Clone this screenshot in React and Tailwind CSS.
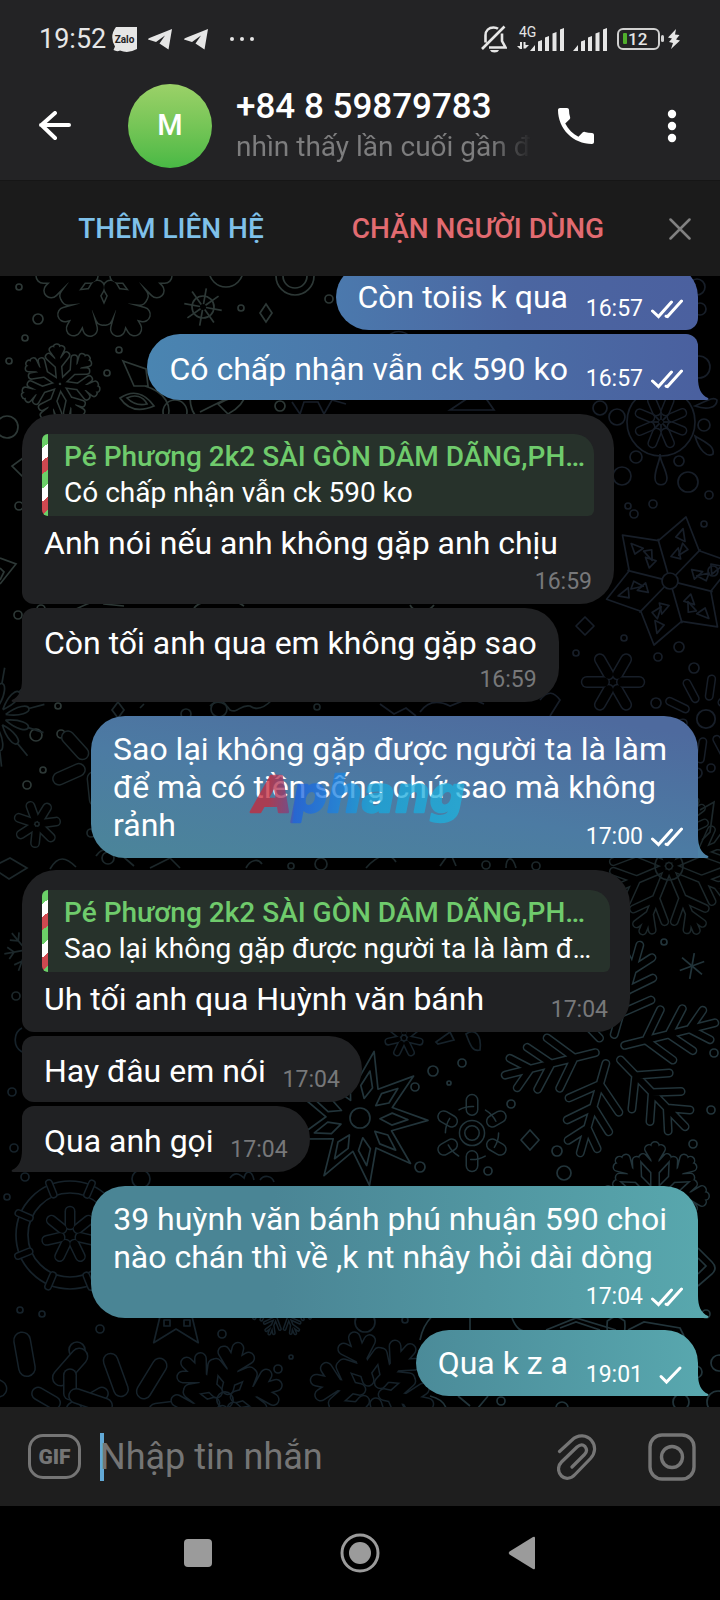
import React from "react";

/* ---------- wallpaper ---------- */

const FERN = "M0 -14V-100M0 -34L-24 -54M0 -34L24 -54M0 -56L-20 -74M0 -56L20 -74M0 -76L-14 -92M0 -76L14 -92";
const BRANCH = "M0 -10V-100M0 -50L-24 -76M0 -50L24 -76M0 -74L-12 -94M0 -74L12 -94";
const PETAL = "M0 -36V-90";
const LEAF = "M0 -20V-92M0 -34L-30 -56M0 -34L30 -56M0 -58L-22 -80M0 -58L22 -80";

function Flake({ x, y, s = 40, n = 6, r = 0, w = 8, d = BRANCH, c, children }) {
  const k = s / 100;
  const arms = Array.from({ length: n }, (_, i) => r + (360 / n) * i);
  return (
    <g transform={`translate(${x} ${y}) scale(${k})`} strokeLinecap="round" strokeLinejoin="round">
      {[
        [c, w + 3],
        ["#000", w],
      ].map(([color, width]) => (
        <g key={width} stroke={color} strokeWidth={width / k}>
          {arms.map((a) => (
            <path key={a} d={d} transform={`rotate(${a})`} />
          ))}
        </g>
      ))}
      {children}
    </g>
  );
}

function Dots({ c, items }) {
  return (
    <g stroke={c}>
      {items.map(([x, y, r]) => (
        <circle key={`${x}-${y}-${r}`} cx={x} cy={y} r={r} />
      ))}
    </g>
  );
}

function Star({ x, y, n, outer, inner, r = 0, c, children }) {
  const pts = [];
  for (let i = 0; i < n * 2; i++) {
    const rad = i % 2 ? inner : outer;
    const a = ((r + (180 / n) * i - 90) * Math.PI) / 180;
    pts.push(`${(Math.cos(a) * rad).toFixed(1)},${(Math.sin(a) * rad).toFixed(1)}`);
  }
  return (
    <g transform={`translate(${x} ${y})`} stroke={c} strokeLinejoin="round">
      <polygon points={pts.join(" ")} />
      {children}
    </g>
  );
}

function Spokes({ n, r = 0, d }) {
  return Array.from({ length: n }, (_, i) => <path key={i} d={d} transform={`rotate(${r + (360 / n) * i})`} />);
}

function Wallpaper() {
  const a = "#2d3836";
  const b = "#171e28";
  const g = "#1c272a";
  const e = "#22343a";
  const f = "#16222a";
  return (
    <svg
      aria-hidden="true"
      className="absolute inset-0 h-full w-full"
      viewBox="0 276 720 1131"
      preserveAspectRatio="xMidYMid slice"
      fill="none"
      strokeWidth="1.7"
    >
      {/* upper left */}
      <Flake x={104} y={276} s={66} r={30} w={13} d={LEAF} c={a} />
      <g stroke={a} transform="translate(203 307)">
        <circle r="11" />
        <Spokes n={8} r={10} d="M0 -3V-19" />
      </g>
      <path d="M266 304l6 9-6 9-6-9z" stroke={a} />
      <Dots
        c={a}
        items={[
          [19, 287, 3], [38, 319, 5], [25, 338, 3], [9, 361, 3], [119, 350, 3], [107, 373, 3], [241, 308, 3],
          [329, 299, 4], [7, 427, 11], [19, 506, 4], [280, 406, 5], [175, 412, 12], [226, 270, 17], [295, 276, 19],
          [295, 276, 12], [18, 615, 4], [41, 609, 4], [58, 706, 3], [36, 735, 6], [61, 734, 4], [43, 770, 3], [27, 785, 4],
        ]}
      />
      <Flake x={60} y={384} s={37} n={7} r={-5} w={5} c={a} />
      <path d="M123 361l23 8 2 17-14 0zM120 398c12-8 24-6 34 8-14 6-26 4-34-8zM127 398c8-4 16-2 20 6-8 2-14 0-20-6zM145 386c20 6 28 20 22 34M190 396c0 14 4 20 10 24M200 412l60-30M218 404c14-8 26-8 30-14-4 14-12 20-20 24z" stroke={a} />
      <path d="M23 458L12 466l12 12M0 558l16 6-16 20M0 568l4 4-4 8" stroke={a} />
      <path d="M292 402l8 12 4-12 14 0 6 12 8-14 14 4M384 340c10-12 20-10 28-2M450 410l30-20 14 20z" stroke={b} />
      <path d="M70 612c20-10 30-14 34-8l20 2M194 608c10-12 30-4 40-8l10 6M410 605c4 8 18 8 24 0" stroke={a} />

      {/* upper right */}
      <Dots
        c={b}
        items={[
          [697, 287, 8], [700, 309, 6], [699, 367, 11], [617, 417, 8], [704, 425, 6], [636, 457, 6], [679, 461, 5],
          [622, 476, 9], [688, 482, 10], [709, 495, 4], [653, 504, 4], [634, 514, 4], [628, 506, 3], [704, 524, 3],
          [624, 638, 3], [576, 653, 3], [679, 647, 5], [658, 657, 4], [713, 571, 5], [656, 703, 5], [694, 668, 5],
          [697, 773, 5], [711, 768, 4], [600, 408, 7],
        ]}
      />
      <Flake x={661} y={422} s={32} n={8} r={22} w={7} d="M0 -36V-72" c={b} />
      <g stroke={b} transform="translate(661 422)">
        <circle r="34" />
        <Spokes n={8} d="M0 -2V-10" />
        <path d="M-6 56c0-10 5-16 5-24 0 8 6 14 7 24 0 9-12 9-12 0zM34 14c10 6 20 10 18 18-6 4-14-4-18-18zM34-16c10-4 18-10 22-6 0 8-10 10-22 6z" />
      </g>
      <Star x={670} y={581} n={6} outer={66} inner={42} r={14} c={b}>
        <circle r="8" />
        <Spokes n={6} r={44} d="M0 -8V-44" />
        <Spokes n={6} r={14} d="M-5 -24L0 -34 5 -24zM-5 -44L0 -54 5 -42z" />
        <Spokes n={6} r={36} d="M-8 -26L-12 -38 -4 -36z" />
      </Star>
      <path d="M585 617l9 9-9 9-9-9z" stroke={b} strokeLinejoin="round" />
      <Flake x={613} y={682} s={32} n={6} r={30} w={9} d="M0 -28V-82" c={b} />
      <Flake x={706} y={719} s={46} n={10} r={8} w={6} d="M0 -50V-88" c={b}>
        <circle r="20" stroke={b} strokeWidth="4" />
      </Flake>
      <path d="M380 704l14 10 12-6 10 8M420 712c10-14 22-10 30-6l20-8 14 6M540 700c8-10 14-8 20 0l-10 16" stroke={b} />

      {/* middle left */}
      <g stroke={g} transform="translate(-4 717)">
        <Spokes n={11} r={10} d="M0 -10C-6 -24 -4 -34 0 -34 4 -34 6 -24 0 -10M0 -34V-50" />
      </g>
      <Flake x={92} y={764} s={40} n={5} r={30} w={11} d={PETAL} c={g} />
      <Flake x={37} y={824} s={24} n={7} r={-20} w={7} d="M0 -26V-80" c={g} />
      <path d="M118 702l6 8-6 8-6-8z" stroke={g} />
      <path d="M-2 864l12-6 17 10-18 11-12-8zM96 856c6-10 20-8 24-2l14 12M150 868l20-10 10 10M210 706c8-8 16-2 20 4 8 4 10-6 20-4 8 6 16 0 22-6M246 868c4-8 12-10 16-4M50 869c8-14 16-12 26-2M140 708l4-4" stroke={g} />
      <Dots c={g} items={[[219, 709, 8], [317, 707, 3], [291, 866, 3], [321, 864, 6], [108, 858, 6], [16, 996, 4], [486, 865, 4], [536, 866, 4], [91, 833, 4], [186, 714, 5]]} />
      <g stroke={g} transform="translate(26 950)">
        <Spokes n={6} r={20} d="M0 -4V-22M0 -12L-6 -18M0 -12L6 -18" />
      </g>

      {/* middle right */}
      <Flake x={669} y={866} s={70} n={8} r={22} w={6} c={g}>
        <circle r="20" stroke={g} strokeWidth="2.4" />
      </Flake>
      <path d="M700 810l14-8-4 30-8 8M440 866l10-14 6 14M506 868c0-10 6-14 10 0M366 868c12-14 24-16 30-6" stroke={g} />
      <g stroke={e} transform="translate(692 966)">
        <Spokes n={6} r={10} d="M0 0V-13" />
      </g>
      <Flake x={610} y={1049} s={108} r={-14 + 90} w={6} d={FERN} c={e} />
      <Star x={360} y={1118} n={9} outer={68} inner={34} r={12} c={e}>
        <Spokes n={9} r={12} d="M0 -20L-6 -32 0 -48 6 -32z" />
        <circle r="10" />
      </Star>
      <Flake x={472} y={1133} s={38} n={6} w={10} d="M0 -62V-86" c={e}>
        <g stroke={e} strokeWidth="4">
          <circle r="70" strokeDasharray="40 33" />
          <circle r="33" />
          <circle r="19" />
        </g>
      </Flake>
      <path d="M530 1130l9 10-9 10-9-10z" stroke={e} strokeLinejoin="round" />
      <Flake x={404} y={1038} s={20} n={7} w={5} d="M0 -30V-80" c={f} />
      <path d="M436 1042l14-10 4 8-16 4zM466 1034c8-6 16 0 14 16-8 2-10-6-14-16z" stroke={f} />
      <Dots
        c={e}
        items={[
          [557, 1151, 5], [564, 1173, 7], [693, 1144, 4], [711, 1110, 4], [714, 1053, 4], [433, 1071, 5], [462, 1063, 4],
          [415, 1087, 4], [511, 1104, 4], [420, 1167, 5], [488, 1171, 4], [664, 942, 3], [449, 1083, 2],
        ]}
      />
      <Flake x={655} y={1196} s={50} n={8} w={7} c={e} />
      <path d="M698 1248l14 14c4 4 4 8 0 12l-14 12M698 1258l8 8-8 8" stroke={e} />

      {/* lower left */}
      <Dots
        c={f}
        items={[
          [12, 1092, 4], [14, 1148, 4], [25, 1177, 4], [7, 1197, 3], [141, 1179, 9], [70, 1235, 54], [70, 1235, 42],
          [20, 1310, 3], [42, 1314, 3], [100, 1329, 4], [152, 1380, 3], [222, 1334, 4], [278, 1369, 4], [291, 1357, 2],
          [365, 1322, 10], [405, 1320, 3], [77, 1350, 8],
        ]}
      />
      <Flake x={70} y={1235} s={56} n={8} r={-22} w={5} d="M0 -78V-100" c={f} />
      <Flake x={70} y={1235} s={34} n={7} w={8} d="M0 -30V-70" c={f} />
      <path d="M22 1052c-10-6-8-20 0-24M230 1178c6-8 12-2 14 0 2-8 8-8 10 2M260 1180c4-6 12-4 14 2" stroke={f} />
      <Star x={176} y={1312} n={5} outer={38} inner={17} c={f}>
        <path d="M-12 8h6v6h-6zM8 8h6v6H8z" />
      </Star>
      <Flake x={282} y={1302} s={34} n={8} r={22} w={1} c={f} />
      <Flake x={34} y={1408} s={78} n={7} r={-10} w={15} d="M0 -52V-88" c={f} />
      <Flake x={70} y={1412} s={46} n={6} r={0} w={11} d="M0 -40V-80" c={f} />
      <Flake x={130} y={1414} s={66} n={7} r={-20} w={13} d="M0 -40V-86" c={f} />
      <Flake x={225} y={1400} s={58} r={14} w={10} d={LEAF} c={f}>
        <circle r="14" stroke={f} strokeWidth="3" />
      </Flake>
      <Flake x={372} y={1392} s={62} r={-18} w={10} d={LEAF} c={f} />

      {/* lower right */}
      <path d="M420 1340c4-20 16-30 30-32M512 1318c4 10 8 14 18 14M546 1330l30-12 40 12M560 1328l16-6 24 8M628 1330l16-8 36 6 4 8M470 1318v14" stroke={e} />
      <Star x={616} y={1326} n={6} outer={10} inner={9} c={e} />
      <Dots c={e} items={[[706, 1314, 4], [562, 1408, 6], [501, 1401, 4], [681, 1402, 8], [719, 1363, 8], [718, 1402, 11], [696, 1372, 6]]} />
      <path d="M430 1396c8 2 14 6 16 12M458 1396l12 10M488 1396l-10 12" stroke={e} />
    </svg>
  );
}

/* ---------- messages ---------- */

function Ticks({ double }) {
  return (
    <svg className="h-5 w-8 shrink-0" viewBox="0 0 32 20" fill="none" stroke="currentColor" strokeWidth="3" strokeLinecap="round" aria-label={double ? "Đã xem" : "Đã gửi"}>
      {double ? <path d="M1.500 12L7.500 17.500 20.500 3M15 17.200L16.500 17.500 30.500 2" /> : <path d="M10 11.500L15.500 17 29 3" />}
    </svg>
  );
}

function Tail({ side }) {
  return (
    <svg
      aria-hidden="true"
      className={side === "right" ? "absolute bottom-0 -right-[11px] h-[22px] w-3" : "absolute bottom-0 -left-[11px] h-[22px] w-3 -scale-x-100"}
      viewBox="0 0 12 22"
    >
      <path d="M0 0H1C1 10 4 17 11 20C12 21 11 22 10 22H0Z" fill="currentColor" />
    </svg>
  );
}

function Quote({ name, text }) {
  return (
    <blockquote className="mx-5 mt-5 mb-2 flex overflow-hidden rounded-md rounded-tr-[20px] bg-[#27322b]">
      <span className="w-1.5 shrink-0 bg-[repeating-linear-gradient(140deg,#6bd068_0px,#6bd068_11px,#fff_11px,#fff_21px,#cf4850_21px,#cf4850_31px)]" />
      <div className="min-w-0 py-[5px] pl-4 text-[28px] leading-9 whitespace-nowrap">
        <p className="font-medium text-[#6fcb6c]">{name}</p>
        <p>{text}</p>
      </div>
    </blockquote>
  );
}

function Message({ out, time, text, quote, continued, tail, inline, tall, double, shape, tone, overlay }) {
  const top = quote ? "pt-0" : continued ? "pt-4" : "pt-3.5";
  const bottom = tall ? (continued ? "pb-10" : "pb-[42px]") : continued ? "pb-3" : "pb-3.5";
  const right = inline ? (out ? "pr-[130px]" : "pr-24") : out ? "pr-[31px]" : "pr-[22px]";
  return (
    <article className={`relative w-fit ${out ? `mr-[22px] self-end ${tone.tail}` : "ml-[22px] text-[#202123]"}`}>
      {tail && <Tail side={out ? "right" : "left"} />}
      <div className={`relative grid text-white ${shape} ${out ? tone.fill : "bg-[#202123]"}`}>
        <div className="col-start-1 row-start-1">
          {quote && <Quote {...quote} />}
          <p className={`pl-[22px] text-[32px] leading-[38px] whitespace-pre ${top} ${bottom} ${right}`}>{text}</p>
        </div>
        <div className={`col-start-1 row-start-1 flex items-center gap-2 self-end justify-self-end text-[23px] leading-6 ${out ? "pr-[15px] pb-[9px]" : "pr-[22px] pb-2.5 text-[#77787a]"}`}>
          <time>{time}</time>
          {out && <Ticks double={double} />}
        </div>
      </div>
      {overlay}
    </article>
  );
}

function Watermark() {
  return (
    <svg className="absolute top-[50px] left-[158px] h-16 w-[224px] opacity-75" viewBox="0 0 224 64">
      <defs>
        <linearGradient id="wordmark" gradientUnits="userSpaceOnUse" x1="0" y1="0" x2="224" y2="20">
          <stop offset=".1" stopColor="#c8283a" />
          <stop offset=".19" stopColor="#8a3c78" />
          <stop offset=".22" stopColor="#1c5fe0" />
          <stop offset=".4" stopColor="#1b82e2" />
          <stop offset=".55" stopColor="#18a6dc" />
          <stop offset="1" stopColor="#1fb4de" />
        </linearGradient>
      </defs>
      <g fontFamily="DejaVu Sans, sans-serif" fontSize="49" fontWeight="700" fontStyle="italic" strokeWidth="2.5" strokeLinejoin="round">
        <text x="5" y="46" fill="url(#wordmark)" stroke="url(#wordmark)">Aphang</text>
      </g>
    </svg>
  );
}

const tones = {
  blue1: { fill: "bg-linear-to-r from-[#4b79ad] via-[#4b66a1] to-[#4b609f]", tail: "text-[#4b609f]" },
  blue2: { fill: "bg-linear-to-r from-[#4a85b1] via-[#4a6da5] via-65% to-[#4a609f]", tail: "text-[#4a609f]" },
  steel: { fill: "bg-[linear-gradient(190deg,#4e6a9e_8%,#4c7ba3_55%,#4b8599)]", tail: "text-[#4d81a5]" },
  teal: { fill: "bg-linear-to-r from-[#4a8595] from-30% to-[#58a7ad]", tail: "text-[#58a7ad]" },
  teal2: { fill: "bg-linear-to-r from-[#4b8b99] to-[#58a7ae]", tail: "text-[#58a7ae]" },
};

const PEER = "Pé Phương 2k2 SÀI GÒN DÂM DÃNG,PH…";

function Chat() {
  return (
    <main className="relative min-h-0 flex-1 overflow-hidden bg-black">
      <Wallpaper />
      <div className="relative flex h-full flex-col-reverse overflow-y-auto [scrollbar-width:none]">
        <div className="flex shrink-0 flex-col pb-[11px]">
          <Message out inline double time="16:57" text="Còn toiis k qua" shape="rounded-[33px] rounded-br-xl" tone={tones.blue1} />
          <div className="h-1" />
          <Message out inline double continued tail time="16:57" text="Có chấp nhận vẫn ck 590 ko" shape="rounded-l-[33px] rounded-tr-xl" tone={tones.blue2} />
          <div className="h-3.5" />
          <Message
            tall
            time="16:59"
            text="Anh nói nếu anh không gặp anh chịu"
            quote={{ name: PEER, text: "Có chấp nhận vẫn ck 590 ko" }}
            shape="w-[592px] rounded-[34px] rounded-bl-xl"
          />
          <div className="h-1" />
          <Message tall continued tail time="16:59" text="Còn tối anh qua em không gặp sao" shape="rounded-r-[34px] rounded-tl-xl" />
          <div className="h-3.5" />
          <Message
            out
            double
            tail
            time="17:00"
            text={"Sao lại không gặp được người ta là làm\nđể mà có tiền sống chứ sao mà không\nrảnh"}
            shape="rounded-t-[34px] rounded-bl-[34px]"
            tone={tones.steel}
            overlay={<Watermark />}
          />
          <div className="h-3" />
          <Message
            time="17:04"
            text="Uh tối anh qua Huỳnh văn bánh"
            quote={{ name: PEER, text: "Sao lại không gặp được người ta là làm đ…" }}
            shape="w-[608px] rounded-[34px] rounded-bl-xl"
          />
          <div className="h-1" />
          <Message inline continued time="17:04" text="Hay đâu em nói" shape="rounded-r-[33px] rounded-l-xl" />
          <div className="h-1" />
          <Message inline continued tail time="17:04" text="Qua anh gọi" shape="rounded-r-[33px] rounded-tl-xl" />
          <div className="h-3.5" />
          <Message
            out
            tall
            double
            tail
            time="17:04"
            text={"39 huỳnh văn bánh phú nhuận 590 choi\nnào chán thì về ,k nt nhây hỏi dài dòng"}
            shape="rounded-t-[34px] rounded-bl-[34px]"
            tone={tones.teal}
          />
          <div className="h-3" />
          <Message out inline tail time="19:01" text="Qua k z a" shape="rounded-l-[33px] rounded-tr-[33px]" tone={tones.teal2} />
        </div>
      </div>
    </main>
  );
}

/* ---------- bars ---------- */

function Plane() {
  return (
    <svg className="h-[21px] w-6" viewBox="0 0 24 21" fill="#e6e6e6" aria-hidden="true">
      <path d="M24 0L20.500 20.500 11.500 14.500 17 6.500 8 13 0 10.500Q0 9.500 2 8.700Z" />
    </svg>
  );
}

function Signal() {
  return (
    <svg className="h-[23px] w-[35px]" viewBox="0 0 35 23" fill="#e6e6e6" aria-hidden="true">
      <path d="M0 23L5 17V23ZM8 13.500L12 12V23H8ZM15 9.500L19 8V23H15ZM22.500 5.500L26.500 4V23H22.500ZM30 1.500L34 0V23H30Z" />
    </svg>
  );
}

function StatusBar() {
  return (
    <div className="flex h-[78px] items-center justify-between pr-10 pl-[39px] text-[#e6e6e6]">
      <div className="flex items-center">
        <span className="text-[27px] leading-8">19:52</span>
        <svg className="ml-1.5 h-[25px] w-[25px]" viewBox="0 0 25 25" aria-label="Zalo">
          <path d="M4 0H25V22Q16 27 8 23.500Q5 25 1.500 23L3 19.500Q-3 9 4 0Z" fill="#e6e6e6" />
          <text x="12.500" y="15.500" textAnchor="middle" fontSize="10" fontWeight="700" fill="#232325" fontFamily="Roboto, sans-serif">Zalo</text>
        </svg>
        <span className="ml-[11px] flex gap-3">
          <Plane />
          <Plane />
        </span>
        <svg className="ml-[22px] h-1 w-6" viewBox="0 0 24 4" fill="currentColor" aria-hidden="true">
          <circle cx="2" cy="2" r="2" />
          <circle cx="12" cy="2" r="2" />
          <circle cx="22" cy="2" r="2" />
        </svg>
      </div>
      <div className="flex items-center">
        <svg className="h-7 w-[26px]" viewBox="0 0 26 28" fill="none" stroke="currentColor" strokeWidth="2.600" aria-label="Im lặng">
          <path d="M1 24L23.500 1.500M4.500 17.500V10.500C4.500 5.500 8 2.500 12.500 2.500 14.500 2.500 16 3 17 3.800M21 8.500V16L24.500 22.500H8" />
          <path d="M9 25H18Q17 27.500 13.500 27.500 10 27.500 9 25Z" fill="currentColor" stroke="none" />
        </svg>
        <svg className="ml-2.5 h-6 w-[13px] overflow-visible" viewBox="0 0 13 24" fill="currentColor" aria-hidden="true">
          <text x="2" y="10" fontSize="14" fontFamily="Roboto, sans-serif">4G</text>
          <path d="M3 15H5V22H3L0 19H3ZM6.500 15H8.500V18H12L8.500 21.500H6.500Z" />
        </svg>
        <Signal />
        <span className="ml-2">
          <Signal />
        </span>
        <svg className="ml-[9px] h-[22px] w-[47px]" viewBox="0 0 47 22" aria-label="Pin 12%">
          <rect x="1" y="1" width="41" height="20" rx="5" fill="none" stroke="#d0d0d0" strokeWidth="2" />
          <rect x="6" y="5" width="4" height="11" rx="1" fill="#4fae2c" />
          <rect x="44" y="7" width="3" height="7" rx="1.500" fill="#d0d0d0" />
          <text x="11" y="17" fontSize="17" fontWeight="500" fill="#e6e6e6" fontFamily="Roboto, sans-serif">12</text>
        </svg>
        <svg className="ml-1 h-5 w-3" viewBox="0 0 12 20" fill="currentColor" aria-hidden="true">
          <path d="M8 0L0 8.500 4 9.500 1 13 5 14 3 20 12 11.500 8 10.500 11.500 6 7 5.500Z" />
        </svg>
      </div>
    </div>
  );
}

function Header() {
  return (
    <header className="bg-[#232325] pb-1.5">
      <StatusBar />
      <div className="flex h-24 items-center pr-11 pl-[39px]">
        <button aria-label="Quay lại" className="text-white">
          <svg className="h-[30px] w-8" viewBox="0 0 32 30" fill="none" stroke="currentColor" strokeWidth="4" strokeLinecap="round" strokeLinejoin="round">
            <path d="M2 14H30M16 2L2.500 14 16 27" />
          </svg>
        </button>
        <div className="ml-[57px] flex h-[84px] w-[84px] shrink-0 items-center justify-center rounded-full bg-linear-to-b from-[#9bd168] to-[#48b945] text-[29px] font-medium text-white">
          M
        </div>
        <div className="ml-6 min-w-0 flex-1">
          <h1 className="text-[35px] leading-[42px] font-medium text-white">+84 8 59879783</h1>
          <p className="w-[298px] overflow-hidden bg-linear-to-r from-[#7d7d7e] from-[255px] to-transparent to-[296px] bg-clip-text text-[28px] leading-[38px] whitespace-nowrap text-transparent">
            nhìn thấy lần cuối gần đây
          </p>
        </div>
        <button aria-label="Gọi" className="ml-5 text-white">
          <svg className="h-9 w-9" viewBox="3 3 18 18" fill="currentColor">
            <path d="M6.620 10.790c1.440 2.830 3.760 5.140 6.590 6.590l2.200-2.200c.27-.27.67-.36 1.020-.24 1.120.37 2.330.57 3.570.57.550 0 1 .45 1 1V20c0 .55-.45 1-1 1-9.390 0-17-7.610-17-17 0-.55.45-1 1-1h3.500c.55 0 1 .45 1 1 0 1.250.2 2.450.57 3.570.11.35.03.74-.25 1.020l-2.200 2.200z" />
          </svg>
        </button>
        <button aria-label="Tùy chọn khác" className="ml-[74px] text-white">
          <svg className="h-8 w-2" viewBox="0 0 8 32" fill="currentColor" overflow="visible">
            <circle cx="4" cy="4" r="4.200" />
            <circle cx="4" cy="16" r="4.200" />
            <circle cx="4" cy="28" r="4.200" />
          </svg>
        </button>
      </div>
    </header>
  );
}

function ContactActions() {
  return (
    <div className="flex h-24 items-center border-t border-[#161616] bg-[#1b1b1b] text-[28px] leading-9 font-medium">
      <button className="flex-[342] basis-0 text-[#7fc1ea]">THÊM LIÊN HỆ</button>
      <button className="flex-[272] basis-0 whitespace-nowrap text-[#e26b71]">CHẶN NGƯỜI DÙNG</button>
      <button aria-label="Đóng" className="flex flex-[106] basis-0 justify-center text-[#818181]">
        <svg className="ml-[26px] h-[22px] w-[22px]" viewBox="0 0 22 22" stroke="currentColor" strokeWidth="2.500" strokeLinecap="round">
          <path d="M1.500 1.500L20.500 20.500M20.500 1.500L1.500 20.500" />
        </svg>
      </button>
    </div>
  );
}

function Composer() {
  return (
    <form className="flex h-[99px] shrink-0 items-center bg-[#1e1e1e] pr-6 pl-7 text-[#757575]" onSubmit={(ev) => ev.preventDefault()}>
      <button type="button" aria-label="GIF" className="flex h-[45px] w-[53px] shrink-0 items-center justify-center rounded-[15px] border-[3px] border-current text-[21px] leading-6 font-black">
        GIF
      </button>
      <span aria-hidden="true" className="-mr-1 ml-[19px] h-12 w-1 bg-[#62a9d6]" />
      <input
        aria-label="Nhập tin nhắn"
        placeholder="Nhập tin nhắn"
        className="min-w-0 flex-1 bg-transparent text-[36px] leading-[48px] outline-none placeholder:text-[#757575]"
      />
      <button type="button" aria-label="Đính kèm">
        <svg className="h-[46px] w-10" viewBox="0 0 40 46" fill="none" stroke="currentColor" strokeWidth="3.200" strokeLinecap="round" strokeLinejoin="round">
          <path d="M2.500 17.500L15 6C21 0 30 1 34.500 6.500 39 12 38.500 19 33.500 24.500L18 40.500C14 45 8 45.500 4.500 42 .5 38 .5 32 4.500 28L20 13C23 10.500 26 10.500 28 12.500 30 15 30 18 27.500 20.500L15 33" />
        </svg>
      </button>
      <button type="button" aria-label="Máy ảnh" className="ml-[51px]">
        <svg className="h-12 w-12" viewBox="0 0 48 48" fill="none" stroke="currentColor" strokeWidth="3.400">
          <rect x="2" y="2" width="44" height="44" rx="12" />
          <circle cx="24" cy="24" r="10.500" />
        </svg>
      </button>
    </form>
  );
}

function NavBar() {
  return (
    <nav className="flex h-[94px] shrink-0 items-center justify-center gap-[103px] bg-black text-[#9b9b9b]">
      <button aria-label="Ứng dụng gần đây" className="flex w-[58px] justify-center">
        <span className="h-7 w-7 rounded bg-current" />
      </button>
      <button aria-label="Màn hình chính" className="flex w-[60px] justify-center">
        <svg className="h-10 w-10" viewBox="0 0 40 40">
          <circle cx="20" cy="20" r="18" fill="none" stroke="currentColor" strokeWidth="3" />
          <circle cx="20" cy="20" r="11" fill="currentColor" />
        </svg>
      </button>
      <button aria-label="Trở về" className="flex w-[58px] justify-center">
        <svg className="h-[34px] w-7" viewBox="0 0 28 34" fill="currentColor">
          <path d="M1.500 15.500L25 1Q27 0 27 2V32Q27 34 25 33L1.500 18.500Q0 17 1.500 15.500Z" />
        </svg>
      </button>
    </nav>
  );
}

export default function App() {
  return (
    <div className="flex h-screen flex-col overflow-hidden bg-black font-[Roboto,'Noto_Sans',sans-serif]">
      <Header />
      <ContactActions />
      <Chat />
      <Composer />
      <NavBar />
    </div>
  );
}
